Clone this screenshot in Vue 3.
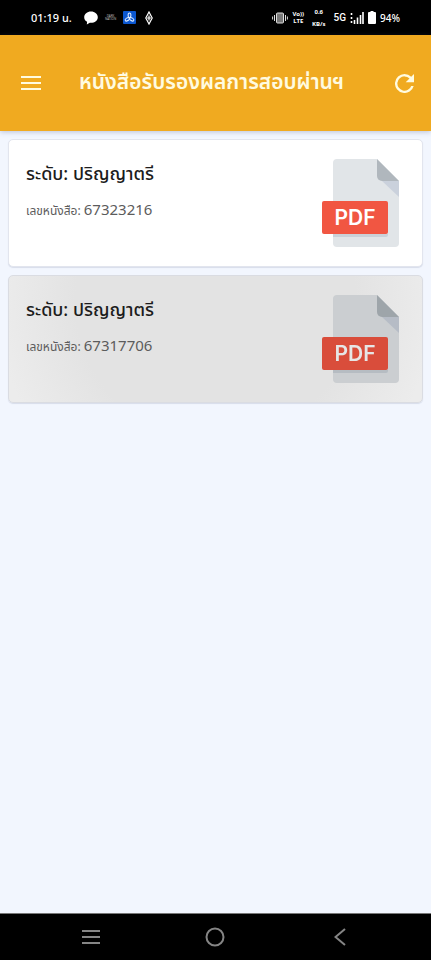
<script setup>
const documents = [
  { level: 'ปริญญาตรี', number: '67323216', pressed: false },
  { level: 'ปริญญาตรี', number: '67317706', pressed: true },
]
</script>

<template>
  <div class="screen">
    <div class="status">
      <div class="status-group">
        <span class="clock">01:19 น.</span>
        <svg width="14" height="14" viewBox="0 0 14 14" aria-hidden="true">
          <path d="M7 .5C3.200.5.2 3 .2 6.200c0 2 1.100 3.500 2.900 4.500l-.3 2.700 3-1.700c4.600.4 8-2 8-5.500C13.800 3 10.800.5 7 .5z" fill="#fff" />
        </svg>
        <span class="tiny-app"><span>DARK</span><span>NATION</span></span>
        <svg width="13" height="13" viewBox="0 0 14 14" aria-hidden="true">
          <rect width="14" height="14" rx="1" fill="#0b57d0" />
          <g fill="none" stroke="#e4efff" stroke-width="1.100">
            <ellipse cx="7" cy="4.700" rx="1.500" ry="2.500" />
            <ellipse cx="4.600" cy="9" rx="1.500" ry="2.500" transform="rotate(60 4.600 9)" />
            <ellipse cx="9.400" cy="9" rx="1.500" ry="2.500" transform="rotate(-60 9.400 9)" />
          </g>
        </svg>
        <svg class="diamond" width="10" height="14" viewBox="0 0 10 14" aria-hidden="true">
          <path d="M5 1 8.200 7 5 13 1.800 7z M5 4.500V9.500 M3 7H7" fill="none" stroke="#fff" stroke-width="1.200" />
        </svg>
      </div>
      <div class="status-group right">
        <svg width="16" height="12" viewBox="0 0 16 12" aria-hidden="true">
          <rect x="4.500" y="1" width="7" height="10" rx="1" fill="#777" stroke="#ddd" />
          <path d="M2.500 3v6M13.500 3v6M.6 4.500v3M15.400 4.500v3" stroke="#ddd" />
        </svg>
        <span class="volte"><span>Vo))</span><span>LTE</span></span>
        <span class="speed"><span>0.6</span><span>KB/s</span></span>
        <span class="network">5G</span>
        <svg width="14" height="12" viewBox="0 0 14 12" aria-hidden="true">
          <path d="M1.500 1v2M1.500 5v2M1.500 9v2M4.500 8v4M7.500 5.500V12M10.500 3v9M13 0v12" stroke="#fff" stroke-width="1.600" />
        </svg>
        <svg class="battery" width="8" height="13" viewBox="0 0 8 13" aria-hidden="true">
          <path d="M2.500 0h3v1H7a1 1 0 0 1 1 1v10a1 1 0 0 1-1 1H1a1 1 0 0 1-1-1V2a1 1 0 0 1 1-1h1.500z" fill="#fff" />
        </svg>
        <span class="percent">94%</span>
      </div>
    </div>

    <header class="app-bar">
      <button type="button" class="icon-button" aria-label="เมนู">
        <svg width="22" height="16" viewBox="0 0 22 16" aria-hidden="true">
          <path d="M1 2h20M1 8h20M1 14h20" stroke="currentColor" stroke-width="2.200" />
        </svg>
      </button>
      <h1>หนังสือรับรองผลการสอบผ่านฯ</h1>
      <button type="button" class="icon-button" aria-label="รีเฟรช">
        <svg width="19" height="19" viewBox="4 4 16 16" aria-hidden="true">
          <path d="M17.650 6.350A7.960 7.960 0 0 0 12 4a8 8 0 1 0 7.730 10h-2.080A6 6 0 1 1 12 6c1.660 0 3.140.690 4.220 1.780L13 11h7V4z" fill="currentColor" />
        </svg>
      </button>
    </header>

    <main class="list">
      <a
        v-for="item in documents"
        :key="item.number"
        href="#"
        class="card"
        :class="{ pressed: item.pressed }"
      >
        <div class="info">
          <h2>ระดับ: {{ item.level }}</h2>
          <p>เลขหนังสือ: <span class="number">{{ item.number }}</span></p>
        </div>
        <svg class="pdf" width="78" height="88" viewBox="0 0 78 88" role="img" aria-label="PDF">
          <path d="M15 0H55L77 22V84a4 4 0 0 1-4 4H15a4 4 0 0 1-4-4V4a4 4 0 0 1 4-4z" fill="#e1e5e8" />
          <path d="M60 22H77V38z" fill="#cad1dc" />
          <path d="M55 0 77 22H60a5 5 0 0 1-5-5z" fill="#b0b7bd" />
          <path d="M11 75H66V76a2 2 0 0 1-2 2H11z" fill="#cad1d8" />
          <rect y="42" width="66" height="33" rx="2" fill="#f15642" />
          <text x="33" y="66" text-anchor="middle">PDF</text>
        </svg>
      </a>
    </main>

    <nav class="system-nav">
      <button type="button" aria-label="แอปล่าสุด">
        <svg width="20" height="16" viewBox="0 0 20 16" aria-hidden="true">
          <path d="M1 2h18M1 8h18M1 14h18" />
        </svg>
      </button>
      <button type="button" aria-label="หน้าหลัก">
        <svg width="20" height="20" viewBox="0 0 20 20" aria-hidden="true">
          <circle cx="10" cy="10" r="8.500" />
        </svg>
      </button>
      <button type="button" aria-label="ย้อนกลับ">
        <svg width="12" height="18" viewBox="0 0 12 18" aria-hidden="true">
          <path d="M11 1 1.500 9 11 17" />
        </svg>
      </button>
    </nav>
  </div>
</template>

<style>
body {
  background: #f2f6fe;
}
</style>

<style scoped>
.screen {
  display: flex;
  flex-direction: column;
  min-height: 100vh;
  background: #f2f6fe;
  font-family: "Noto Sans", "Noto Sans Thai", sans-serif;
}

.status {
  display: flex;
  justify-content: space-between;
  align-items: center;
  box-sizing: border-box;
  height: 35px;
  padding: 0 31px;
  background: #000;
  color: #fff;
}

.status-group {
  display: flex;
  align-items: center;
  gap: 12px;
}

.status-group.right {
  gap: 4px;
}

.clock {
  font-size: 11px;
  line-height: 16px;
  font-weight: 500;
}

.tiny-app,
.volte,
.speed {
  display: flex;
  flex-direction: column;
  align-items: center;
}

.tiny-app {
  margin: 0 -5px;
  font-size: 3px;
  line-height: 3px;
  color: #bbb;
}

.diamond {
  margin-left: -4px;
}

.volte {
  font-size: 6px;
  line-height: 7px;
  font-weight: 700;
}

.speed {
  margin: 0 4px;
  gap: 4px;
  font-size: 6px;
  line-height: 8px;
  font-weight: 700;
}

.network {
  font-family: Roboto, sans-serif;
  font-size: 10px;
  font-weight: 500;
}

.percent {
  font-size: 10px;
  font-weight: 500;
}

.app-bar {
  display: flex;
  align-items: center;
  box-sizing: border-box;
  height: 96px;
  padding: 0 7px 0 11px;
  background: #f0aa20;
  color: #fffbe0;
  box-shadow: 0 1px 5px rgba(60, 80, 130, 0.3);
}

.icon-button {
  display: flex;
  align-items: center;
  justify-content: center;
  width: 40px;
  height: 40px;
  padding: 0;
  border: 0;
  background: none;
  color: inherit;
}

h1 {
  flex: 1;
  margin: 0 0 4px;
  padding-left: 28px;
  font-size: 21px;
  line-height: 32px;
  font-weight: 600;
  white-space: nowrap;
}

.list {
  flex: 1;
  display: flex;
  flex-direction: column;
  gap: 8px;
  padding: 8px;
}

.card {
  display: flex;
  justify-content: space-between;
  align-items: flex-start;
  padding: 19px 22px 19px 17px;
  border: 1px solid #e2e5ee;
  border-radius: 5px;
  background: #fff;
  box-shadow: 0 1px 1px rgba(70, 80, 120, 0.15);
  color: #1c1c1c;
  text-decoration: none;
}

.card.pressed {
  border-color: #dadce2;
  background: radial-gradient(circle at 50% 20%, #e3e3e3 140px, #ececec 220px);
}

.card.pressed .pdf {
  filter: brightness(0.9);
}

h2 {
  margin: 0;
  font-size: 18px;
  line-height: 28px;
  font-weight: 500;
}

p {
  margin: 8px 0 0;
  font-size: 12px;
  line-height: 28px;
  color: #5c5c5c;
}

.number {
  font-size: 15px;
}

.pdf text {
  fill: #fff;
  font-family: Inter, sans-serif;
  font-size: 21px;
  font-weight: 600;
}

.system-nav {
  display: flex;
  justify-content: space-around;
  align-items: center;
  box-sizing: border-box;
  height: 47px;
  padding: 0 29px;
  background: #000;
  border-top: 1px solid #777;
}

.system-nav button {
  display: flex;
  align-items: center;
  justify-content: center;
  width: 48px;
  height: 40px;
  padding: 0;
  border: 0;
  background: none;
}

.system-nav svg {
  fill: none;
  stroke: #858585;
  stroke-width: 2px;
}
</style>
